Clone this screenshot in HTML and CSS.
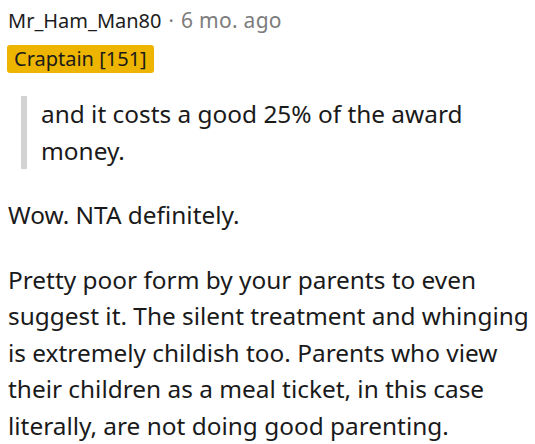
FILE: index.html
```html
<!DOCTYPE html>
<html>
<head>
<meta charset="utf-8">
<link rel="stylesheet" href="styles.css">
</head>
<body>
<div class="comment">
  <div class="meta">
    <span class="author">Mr_Ham_Man80</span>
    <span class="dot">·</span>
    <span class="time">6 mo. ago</span>
  </div>
  <div class="flair">Craptain [151]</div>
  <blockquote class="quote">
    <p>and it costs a good 25% of the award money.</p>
  </blockquote>
  <p class="para">Wow. NTA definitely.</p>
  <p class="para">Pretty poor form by your parents to even suggest it. The silent treatment and whinging is extremely childish too. Parents who view their children as a meal ticket, in this case literally, are not doing good parenting.</p>
</div>
</body>
</html>
```
FILE: styles.css
```css
html, body {
  margin: 0;
  padding: 0;
  background: #ffffff;
}
.comment {
  padding: 6px 2px 0 8px;
  font-family: "Noto Sans", sans-serif;
  color: #1a1a1b;
}
.meta {
  display: flex;
  align-items: baseline;
  gap: 7px;
  font-size: 20px;
  line-height: 28px;
}
.author {
  color: #1c1c1c;
}
.dot {
  color: #7c7c7c;
}
.time {
  color: #7c7c7c;
  font-size: 21px;
  letter-spacing: 0.3px;
}
.flair {
  display: inline-block;
  margin-top: 10px;
  margin-left: -1px;
  padding: 0 7px;
  background: #edb500;
  border-radius: 3px;
  font-size: 20px;
  line-height: 28px;
  color: #1a1a1b;
}
.quote {
  margin: 23px 0 0 13px;
  padding: 0 0 0 14px;
  border-left: 6px solid #d3d3d3;
}
.quote p {
  margin: 0;
  font-size: 24.4px;
  line-height: 36.5px;
}
.para {
  margin: 28px 0 0 0;
  font-size: 24.4px;
  line-height: 36.5px;
}
```
